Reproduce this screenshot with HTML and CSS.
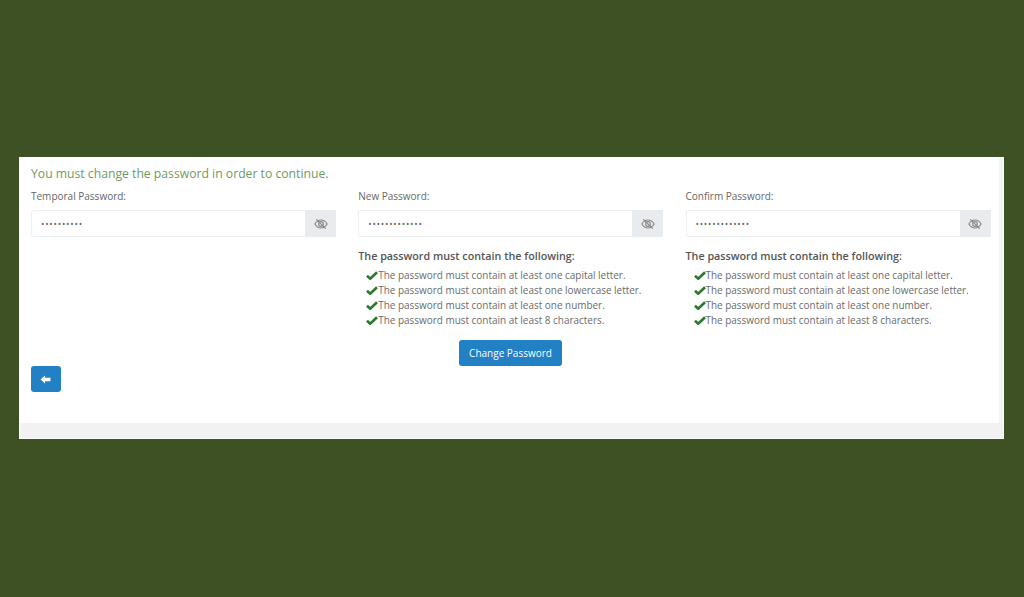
FILE: index.html
```html
<!DOCTYPE html>
<html lang="en">
<head>
  <meta charset="UTF-8" />
  <title>Change Password</title>
  <link rel="stylesheet" href="styles.css">
</head>
<body>
  <svg class="icon-defs" width="0" height="0" aria-hidden="true">
    <symbol id="eye-off" viewBox="0 0 24 24">
      <path d="M1.5 12C4 7.5 7.6 5.2 12 5.2s8 2.3 10.5 6.8C20 16.500 16.400 18.800 12 18.800S4 16.500 1.500 12z" fill="none" stroke="currentColor" stroke-width="2"/>
      <circle cx="12" cy="12" r="4" fill="none" stroke="currentColor" stroke-width="2"/>
      <path d="M4 4l16 16" stroke="currentColor" stroke-width="2"/>
    </symbol>
    <symbol id="check" viewBox="0 0 16 12">
      <path d="M1.300 6.300L5.600 10.200L14.700 1.800" fill="none" stroke="currentColor" stroke-width="3.600"/>
    </symbol>
  </svg>

  <main class="card">
    <div class="card-body">
      <p class="notice">You must change the password in order to continue.</p>

      <form class="fields">
        <div class="field">
          <label class="field-label">Temporal Password:</label>
          <div class="input-group">
            <input class="input" type="text" value="••••••••••" readonly>
            <span class="addon"><svg class="eye"><use href="#eye-off"/></svg></span>
          </div>
        </div>

        <div class="field">
          <label class="field-label">New Password:</label>
          <div class="input-group">
            <input class="input" type="text" value="•••••••••••••" readonly>
            <span class="addon"><svg class="eye"><use href="#eye-off"/></svg></span>
          </div>
          <h4 class="rules-title">The password must contain the following:</h4>
          <ul class="rules">
            <li><svg class="tick"><use href="#check"/></svg>The password must contain at least one capital letter.</li>
            <li><svg class="tick"><use href="#check"/></svg>The password must contain at least one lowercase letter.</li>
            <li><svg class="tick"><use href="#check"/></svg>The password must contain at least one number.</li>
            <li><svg class="tick"><use href="#check"/></svg>The password must contain at least 8 characters.</li>
          </ul>
        </div>

        <div class="field">
          <label class="field-label">Confirm Password:</label>
          <div class="input-group">
            <input class="input" type="text" value="•••••••••••••" readonly>
            <span class="addon"><svg class="eye"><use href="#eye-off"/></svg></span>
          </div>
          <h4 class="rules-title">The password must contain the following:</h4>
          <ul class="rules">
            <li><svg class="tick"><use href="#check"/></svg>The password must contain at least one capital letter.</li>
            <li><svg class="tick"><use href="#check"/></svg>The password must contain at least one lowercase letter.</li>
            <li><svg class="tick"><use href="#check"/></svg>The password must contain at least one number.</li>
            <li><svg class="tick"><use href="#check"/></svg>The password must contain at least 8 characters.</li>
          </ul>
        </div>
      </form>

      <div class="submit-row">
        <button type="button" class="btn">Change Password</button>
      </div>

      <button type="button" class="btn btn-back" aria-label="Back">
        <svg viewBox="0 0 12 10" width="11" height="9"><path d="M0.500 5L5.500 0.500V3H11.500V7H5.500V9.500z" fill="currentColor"/></svg>
      </button>
    </div>
    <div class="card-footer"></div>
  </main>
</body>
</html>
```

FILE: styles.css
```css
* { box-sizing: border-box; }

html, body {
  margin: 0;
  padding: 0;
  height: 597px;
  overflow: hidden;
  font-family: "Open Sans", sans-serif;
  background: #3e5125;
  color: #555;
}

body { padding: 157px 20px 0 19px; }

.icon-defs { display: block; height: 0; }

.card {
  height: 282px;
  background: #f3f5f5;
  border: 1px solid #fbfbfa;
  display: flex;
  flex-direction: column;
}

.card-body {
  flex: 1;
  background: white;
  margin-right: 4px;
  padding: 7px 7px 0 11px;
}

.notice {
  margin: 0 0 6px;
  font-size: 12.200px;
  line-height: 18px;
  color: #6f9a5f;
}

.fields {
  display: grid;
  grid-template-columns: repeat(3, 305px);
  column-gap: 22.250px;
}

.field-label {
  display: block;
  font-size: 10px;
  line-height: 15px;
  color: #666;
  margin-bottom: 6px;
}

.input-group {
  display: flex;
  height: 27px;
}

.input {
  flex: 1;
  min-width: 0;
  border: 1px solid #eceeef;
  border-right: none;
  border-radius: 3px 0 0 3px;
  padding: 0 9px;
  font: 9px "Open Sans", sans-serif;
  letter-spacing: 0.800px;
  color: #666;
  background: white;
  outline: none;
}

.addon {
  width: 31px;
  background: #e9ecef;
  color: #888;
  display: flex;
  align-items: center;
  justify-content: center;
}

.eye { width: 14px; height: 14px; }

.rules-title {
  margin: 12px 0 4px;
  font-size: 10.750px;
  line-height: 15px;
  font-weight: 600;
  color: #555;
}

.rules {
  margin: 0;
  padding: 0 0 0 8px;
  list-style: none;
}

.rules li {
  display: flex;
  align-items: center;
  font-size: 9.950px;
  line-height: 15px;
  color: #6b6b6b;
  white-space: nowrap;
}

.tick {
  width: 12px;
  height: 9px;
  color: #2a7a2a;
  flex: none;
}

.submit-row {
  display: flex;
  justify-content: center;
  margin-top: 12px;
  padding-right: 2px;
}

.btn {
  height: 26px;
  padding: 0 10px;
  border: none;
  border-radius: 3px;
  background: #2280c4;
  color: white;
  font: 10px "Open Sans", sans-serif;
}

.btn-back {
  display: flex;
  align-items: center;
  justify-content: center;
  width: 29.500px;
  padding: 0;
  margin-top: 0;
}

.card-footer {
  height: 15px;
  margin-left: 3px;
  background: #f2f2f2;
}
```
